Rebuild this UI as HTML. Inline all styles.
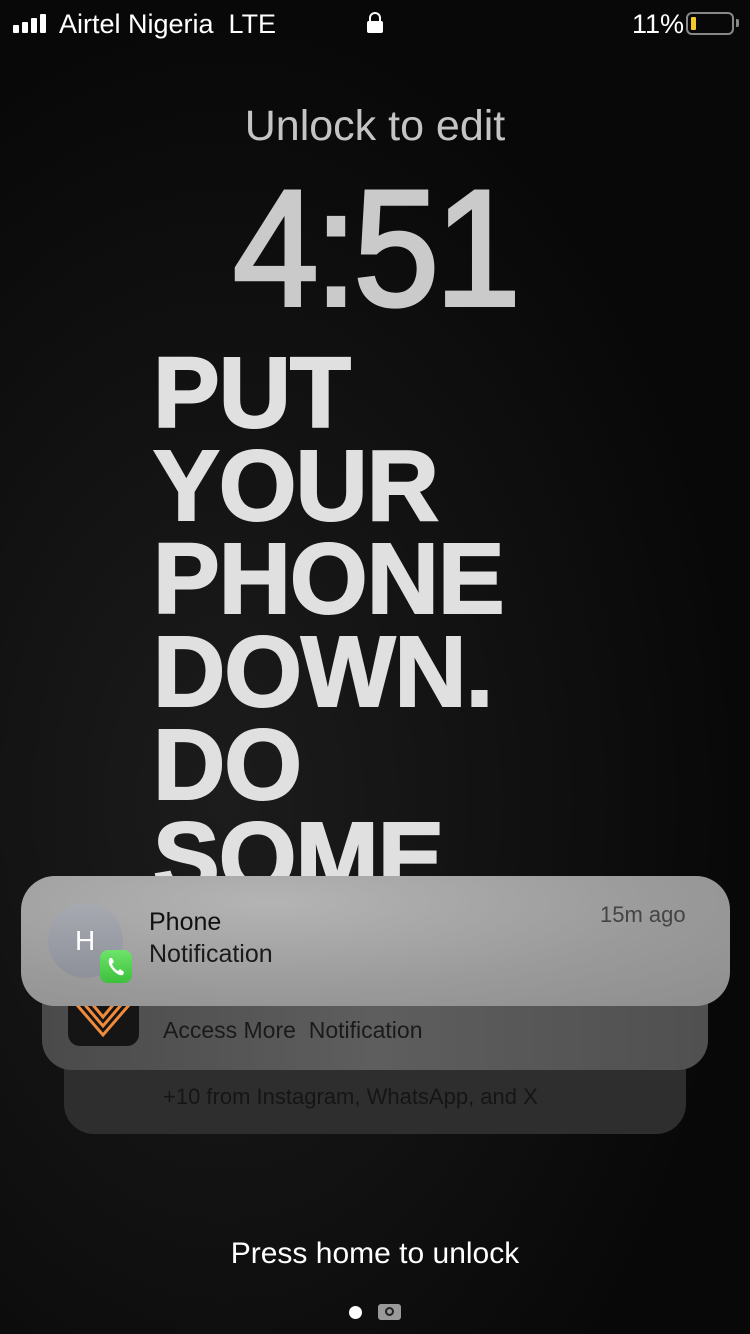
<!DOCTYPE html>
<html><head><meta charset="utf-8"><style>
*{margin:0;padding:0;box-sizing:border-box}
body{width:750px;height:1334px;overflow:hidden;font-family:"Liberation Sans",sans-serif;background:radial-gradient(ellipse at 30% 60%,#1c1c1c,#080808 70%);position:relative;color:#fff}
.abs{position:absolute}
.big{position:absolute;left:153px;font-weight:bold;font-size:100px;line-height:93px;color:#e0e0e0;letter-spacing:-1px;top:347px;-webkit-text-stroke:2px #e0e0e0}
</style></head><body>
<div class="abs" style="left:13px;top:14px;display:flex;align-items:flex-end;gap:3px">
<div style="width:6px;height:8px;background:#fff;border-radius:1px"></div>
<div style="width:6px;height:11px;background:#fff;border-radius:1px"></div>
<div style="width:6px;height:15px;background:#fff;border-radius:1px"></div>
<div style="width:6px;height:19px;background:#fff;border-radius:1px"></div>
</div>
<div class="abs" style="left:59px;top:9px;font-size:27px">Airtel Nigeria&nbsp; LTE</div>
<div class="abs" style="left:367px;top:21px;width:16px;height:12px;background:#fff;border-radius:2px"></div>
<div class="abs" style="left:369px;top:12px;width:12px;height:13px;border:2.5px solid #fff;border-bottom:none;border-radius:6px 6px 0 0"></div>
<div class="abs" style="left:632px;top:9px;font-size:27px">11%</div>
<div class="abs" style="left:686px;top:12px;width:48px;height:23px;border:2px solid #888;border-radius:6px"><div style="margin:3px;width:5px;height:13px;background:#f4c92a;border-radius:1px"></div></div>
<div class="abs" style="left:736px;top:19px;width:3px;height:8px;background:#888;border-radius:0 2px 2px 0"></div>
<div class="abs" style="left:0;width:750px;top:102px;text-align:center;font-size:43px;color:#c4c4c4">Unlock to edit</div>
<div class="abs" style="left:0;width:750px;top:166px;text-align:center;font-size:165px;line-height:165px;color:#cacaca;letter-spacing:-4px;-webkit-text-stroke:4px #cacaca;transform:scaleX(0.93)">4:51</div>
<div class="big">PUT<br>YOUR<br>PHONE<br>DOWN.<br>DO<br>SOME</div>
<div class="abs" style="left:64px;top:1040px;width:622px;height:94px;border-radius:30px;background:#2e2e2e"></div>
<div class="abs" style="left:163px;top:1084px;font-size:22px;color:#151515">+10 from Instagram, WhatsApp, and X</div>
<div class="abs" style="left:42px;top:975px;width:666px;height:95px;border-radius:30px;background:linear-gradient(90deg,#4a4a4a,#5e5e5e 50%,#505050)"></div>
<div class="abs" style="left:68px;top:975px;width:71px;height:71px;border-radius:12px;background:#151515;overflow:hidden"><svg width="71" height="71" viewBox="0 0 71 71"><g fill="none" stroke="#f08a3c" stroke-width="3"><path d="M9 30 L35 60 L61 30"/><path d="M17 30 L35 51 L53 30"/><path d="M25 30 L35 42 L45 30"/></g></svg></div>
<div class="abs" style="left:163px;top:1017px;font-size:23px;color:#1a1a1a">Access More&nbsp; Notification</div>
<div class="abs" style="left:700px;top:977px;font-size:20px;color:#999">rs</div>
<div class="abs" style="left:21px;top:876px;width:709px;height:130px;border-radius:34px;background:radial-gradient(ellipse at 35% 20%,#b4b4b4,#9a9a9a 60%,#8e8e8e)"></div>
<div class="abs" style="left:48px;top:903px;width:75px;height:75px;border-radius:50%;background:linear-gradient(#a8aab2,#8e909a)"></div>
<div class="abs" style="left:75px;top:925px;font-size:28px;color:#fff">H</div>
<div class="abs" style="left:100px;top:950px;width:32px;height:33px;border-radius:8px;background:linear-gradient(#6ee46a,#3cc03c)"><svg width="32" height="33" viewBox="0 0 32 33"><path d="M10 8 C8 10 8 14 12 19 C16 24 20 26 23 25 L24 22 L20 19 L18 21 C16 20 13 17 12 14 L14 12 L12 8 Z" fill="#fff"/></svg></div>
<div class="abs" style="left:149px;top:908px;font-size:25px;color:#111">Phone</div>
<div class="abs" style="left:149px;top:940px;font-size:25px;color:#1a1a1a">Notification</div>
<div class="abs" style="left:600px;top:902px;font-size:22px;color:#444">15m ago</div>
<div class="abs" style="left:0;width:750px;top:1237px;text-align:center;font-size:30px;color:#fff">Press home to unlock</div>
<div class="abs" style="left:349px;top:1306px;width:13px;height:13px;border-radius:50%;background:#fff"></div>
<div class="abs" style="left:378px;top:1304px;width:23px;height:16px;border-radius:3px;background:#999"><div style="margin:3px auto;width:9px;height:9px;border-radius:50%;border:2px solid #222"></div></div>
</body></html>
